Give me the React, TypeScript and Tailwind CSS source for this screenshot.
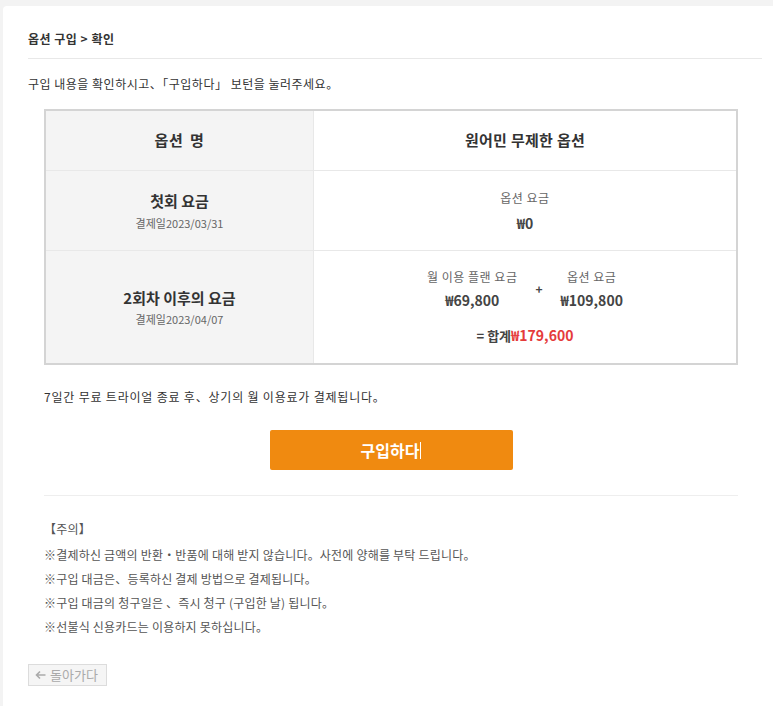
import React from 'react';

const notes = [
  '※결제하신 금액의 반환・반품에 대해 받지 않습니다。사전에 양해를 부탁 드립니다。',
  '※구입 대금은、등록하신 결제 방법으로 결제됩니다。',
  '※구입 대금의 청구일은 、즉시 청구 (구입한 날) 됩니다。',
  '※선불식 신용카드는 이용하지 못하십니다。',
];

const PriceBlock: React.FC<{ label: string; value: string }> = ({ label, value }) => (
  <div className="flex flex-col items-center">
    <span className="text-[12px] leading-[16px] tracking-[0.5px] text-[#666]">{label}</span>
    <span className="mt-[6px] text-[14px] font-bold leading-[18px] text-[#444]">{value}</span>
  </div>
);

export default function App() {
  return (
    <div
      className="min-h-[706px] bg-[#f3f3f3] pl-[3px] pt-[6px] text-[#333]"
      style={{ fontFamily: '"Noto Sans CJK KR", "Noto Sans", sans-serif' }}
    >
      <div className="min-h-[700px] rounded-tl-[4px] bg-white pl-[25px] pr-[11px] pt-[23px]">
        <h1 className="text-[12px] font-bold leading-[20px] tracking-[0.5px] text-[#333]">옵션 구입 &gt; 확인</h1>
        <div className="mt-[9px] h-px bg-[#e8e8e8]" />
        <p className="mt-[15px] text-[12px] leading-[20px] tracking-[0.5px] text-[#333]">
          구입 내용을 확인하시고、「구입하다」 보턴을 눌러주세요。
        </p>

        <div className="mt-[15px] pl-[16px] pr-[24px]">
          <div className="border-2 border-[#d4d4d4]">
            <div className="grid grid-cols-[268px_1fr]">
              <div className="flex h-[59px] items-center justify-center border-r border-[#e8e8e8] bg-[#f4f4f4] text-[15px] font-bold tracking-[0.5px] text-[#333] [word-spacing:3px]">
                옵션 명
              </div>
              <div className="flex h-[59px] items-center justify-center text-[15px] font-bold tracking-[0.3px] text-[#333]">
                원어민 무제한 옵션
              </div>

              <div className="flex h-[80px] flex-col items-center justify-center border-r border-t border-[#e8e8e8] bg-[#f4f4f4]">
                <span className="text-[15px] font-bold leading-[20px] text-[#333]">첫회 요금</span>
                <span className="mt-[4px] text-[11px] leading-[16px] text-[#666]">결제일2023/03/31</span>
              </div>
              <div className="flex h-[80px] flex-col items-center justify-center border-t border-[#e8e8e8]">
                <div className="flex flex-col items-center">
                  <span className="text-[12px] leading-[16px] tracking-[0.5px] text-[#666]">옵션 요금</span>
                  <span className="mt-[8px] text-[14px] font-bold leading-[18px] text-[#444]">₩0</span>
                </div>
              </div>

              <div className="flex h-[113px] flex-col items-center justify-center border-r border-t border-[#e8e8e8] bg-[#f4f4f4]">
                <span className="text-[15px] font-bold leading-[20px] text-[#333]">2회차 이후의 요금</span>
                <span className="mt-[3px] text-[11px] leading-[16px] text-[#666]">결제일2023/04/07</span>
              </div>
              <div className="flex h-[113px] flex-col items-center justify-center border-t border-[#e8e8e8]">
                <div className="flex items-center gap-[18px]">
                  <PriceBlock label="월 이용 플랜 요금" value="₩69,800" />
                  <span className="text-[12px] font-bold text-[#444]">+</span>
                  <PriceBlock label="옵션 요금" value="₩109,800" />
                </div>
                <div className="mt-[17px] text-[13px] font-bold leading-[18px] text-[#444]">
                  = 합계<span className="text-[14px] text-[#e53b3b]">₩179,600</span>
                </div>
              </div>
            </div>
          </div>

          <p className="mt-[22px] text-[12px] leading-[20px] tracking-[0.8px] text-[#333]">
            7일간 무료 트라이얼 종료 후、상기의 월 이용료가 결제됩니다。
          </p>

          <div className="mt-[23px] flex justify-center">
            <button className="flex h-[40px] w-[243px] items-center justify-center rounded-[2px] bg-[#f08a10] text-[16px] font-bold text-white">
              구입하다<span className="ml-[1px] inline-block h-[17px] w-px bg-white" />
            </button>
          </div>

          <div className="mt-[25px] h-px bg-[#eeeeee]" />

          <div className="mt-[21px] text-[12px] leading-[24px] tracking-[0.2px] text-[#555]">
            <div>【주의】</div>
            <ul className="mt-[2px]">
              {notes.map((n) => (
                <li key={n}>{n}</li>
              ))}
            </ul>
          </div>
        </div>

        <button className="mt-[25px] flex h-[22px] w-[79px] items-center gap-[4px] border border-[#dcdcdc] bg-[#f5f5f5] px-[6px] text-[13px] text-[#aaa]">
          <svg width="11" height="10" viewBox="0 0 11 10" fill="none" stroke="#aaa" strokeWidth="1.6">
            <path d="M10.5 5H2M5 1.5L1.5 5 5 8.5" />
          </svg>
          돌아가다
        </button>
      </div>
    </div>
  );
}
